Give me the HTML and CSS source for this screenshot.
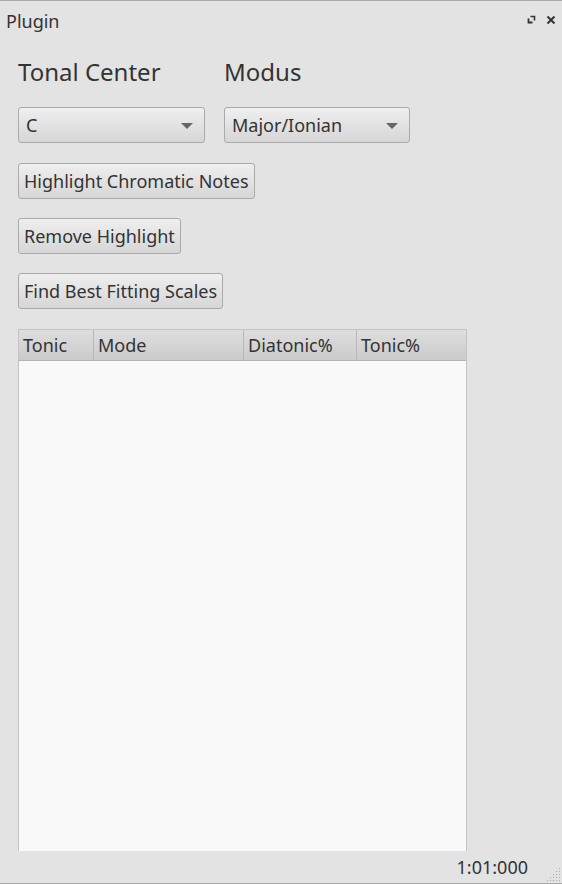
FILE: index.html
```html
<!DOCTYPE html>
<html>
<head>
<meta charset="utf-8">
<link rel="stylesheet" href="styles.css">
</head>
<body>
<div class="window">
  <div class="titlebar">
    <span class="title">Plugin</span>
    <div class="title-icons">
      <svg class="ico-float" width="9" height="9" viewBox="0 0 9 9"><path d="M3.5 1.5H7.5V5.5" fill="none" stroke="#333" stroke-width="1.6"/><path d="M1.5 3.5V7.5H5.5" fill="none" stroke="#333" stroke-width="1.8"/></svg>
      <svg class="ico-close" width="10" height="10" viewBox="0 0 10 10"><path d="M1.5 1.5L8.5 8.5M8.5 1.5L1.5 8.5" stroke="#333" stroke-width="2"/></svg>
    </div>
  </div>
  <div class="content">
    <div class="grid">
      <div class="label">Tonal Center</div>
      <div class="label">Modus</div>
      <div class="combo"><span>C</span><span class="arrow"></span></div>
      <div class="combo"><span>Major/Ionian</span><span class="arrow"></span></div>
    </div>
    <div class="buttons">
      <button class="btn">Highlight Chromatic Notes</button>
      <button class="btn">Remove Highlight</button>
      <button class="btn">Find Best Fitting Scales</button>
    </div>
    <div class="table">
      <div class="thead">
        <div class="th c1">Tonic</div>
        <div class="th c2">Mode</div>
        <div class="th c3">Diatonic%</div>
        <div class="th c4">Tonic%</div>
      </div>
      <div class="tbody"></div>
    </div>
  </div>
  <div class="statusbar">
    <span class="time">1:01:000</span>
    <svg class="grip" width="14" height="14" viewBox="0 0 14 14">
      <rect x="12" y="0" width="1" height="1" fill="#aaa"/>
      <rect x="9" y="3" width="1" height="1" fill="#aaa"/>
      <rect x="12" y="3" width="1" height="1" fill="#aaa"/>
      <rect x="6" y="6" width="1" height="1" fill="#aaa"/>
      <rect x="9" y="6" width="1" height="1" fill="#aaa"/>
      <rect x="12" y="6" width="1" height="1" fill="#aaa"/>
      <rect x="3" y="9" width="1" height="1" fill="#aaa"/>
      <rect x="6" y="9" width="1" height="1" fill="#aaa"/>
      <rect x="9" y="9" width="1" height="1" fill="#aaa"/>
      <rect x="12" y="9" width="1" height="1" fill="#aaa"/>
      <rect x="0" y="12" width="1" height="1" fill="#aaa"/>
      <rect x="3" y="12" width="1" height="1" fill="#aaa"/>
      <rect x="6" y="12" width="1" height="1" fill="#aaa"/>
      <rect x="9" y="12" width="1" height="1" fill="#aaa"/>
      <rect x="12" y="12" width="1" height="1" fill="#aaa"/>
    </svg>
  </div>
</div>
</body>
</html>
```
FILE: styles.css
```css
* { box-sizing: border-box; }
html, body { margin: 0; padding: 0; }
body {
  width: 562px;
  height: 884px;
  background: #e3e3e3;
  font-family: "Noto Sans", "DejaVu Sans", sans-serif;
  color: #333;
  overflow: hidden;
}
.window {
  position: relative;
  height: 884px;
  border-top: 1px solid #a9a9a9;
  border-bottom: 1px solid #a9a9a9;
  display: flex;
  flex-direction: column;
}
.titlebar {
  height: 39px;
  flex: none;
  display: flex;
  align-items: center;
  justify-content: space-between;
  padding: 0 6px 0 6px;
}
.title { font-size: 18px; color: #333; line-height: 20px; }
.title-icons { display: flex; align-items: center; gap: 10px; margin-top: -2px; }
.title-icons svg { display: block; }
.content {
  flex: 1;
  display: flex;
  flex-direction: column;
  padding-left: 18px;
  padding-top: 17px;
  min-height: 0;
}
.grid {
  display: grid;
  grid-template-columns: 187px 186px;
  column-gap: 19px;
  row-gap: 20px;
}
.label {
  font-size: 24px;
  line-height: 30px;
  height: 30px;
  color: #333;
}
.combo {
  height: 36px;
  border: 1px solid #aaaaaa;
  border-radius: 3px;
  background: linear-gradient(#efefef, #d6d6d6);
  display: flex;
  align-items: center;
  justify-content: space-between;
  padding: 0 11px 0 7px;
  font-size: 18px;
  color: #333;
}
.arrow {
  width: 0; height: 0;
  border-left: 6px solid transparent;
  border-right: 6px solid transparent;
  border-top: 6px solid #666;
  margin-top: 1px;
}
.buttons {
  display: flex;
  flex-direction: column;
  align-items: flex-start;
  gap: 19px;
  margin-top: 20px;
}
.btn {
  height: 36px;
  border: 1px solid #aaaaaa;
  border-radius: 3px;
  background: linear-gradient(#efefef, #d6d6d6);
  font-family: "Noto Sans", "DejaVu Sans", sans-serif;
  font-size: 18px;
  color: #333;
  padding: 0 5px;
  margin: 0;
  line-height: 20px;
}
.table {
  margin-top: 20px;
  width: 449px;
  flex: 1;
  display: flex;
  flex-direction: column;
  border-left: 1px solid #c4c4c4;
  border-right: 1px solid #c4c4c4;
  border-top: 1px solid #c4c4c4;
  min-height: 0;
}
.thead {
  height: 31px;
  flex: none;
  display: flex;
  background: linear-gradient(#dedede, #cbcbcb);
  border-bottom: 1px solid #b4b4b4;
}
.th {
  font-size: 18px;
  line-height: 30px;
  color: #333;
  padding-left: 4px;
  border-right: 1px solid #b8b8b8;
}
.c1 { width: 75px; }
.c2 { width: 150px; }
.c3 { width: 113px; }
.c4 { flex: 1; border-right: none; }
.tbody { flex: 1; background: #f9f9f9; }
.statusbar {
  height: 32px;
  flex: none;
  display: flex;
  align-items: center;
  justify-content: flex-end;
  padding-right: 34px;
}
.time { font-size: 18px; color: #333; }
.grip { position: absolute; right: 1px; bottom: 1px; }
```
